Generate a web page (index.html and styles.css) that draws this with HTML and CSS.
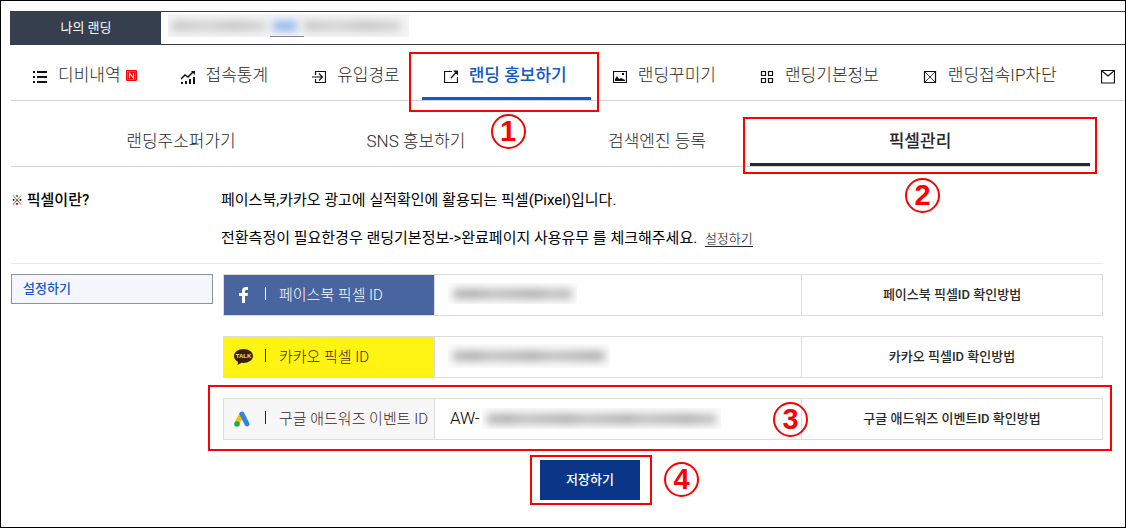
FILE: index.html
```html
<!DOCTYPE html>
<html lang="ko">
<head>
<meta charset="utf-8">
<meta name="viewport" content="width=device-width, initial-scale=1">
<title>픽셀관리</title>
<link rel="stylesheet" href="styles.css">
</head>
<body>
<div class="page">
  <header class="topbar">
    <div class="topbar-title">나의 랜딩</div>
    <div class="topbar-info">
      <div class="mask mask-info"><span class="smear smear-a"></span><span class="smear smear-link"></span><span class="smear smear-b"></span></div>
    </div>
  </header>

  <nav class="menu">
    <a class="menu-item" href="#db">
      <svg class="icon" viewBox="0 0 14 14"><path d="M0 1h2v2H0zM4 1h10v2H4zM0 6h2v2H0zM4 6h10v2H4zM0 11h2v2H0zM4 11h10v2H4z"/></svg>
      <span class="menu-text">디비내역<svg class="new" viewBox="0 0 11 11"><rect width="11" height="11" rx="1" fill="#f00"/><rect x="1.500" y="1.500" width="8" height="8" fill="none" stroke="#ff8080" stroke-width=".6"/><path d="M3.500 8V3l4 5V3" fill="none" stroke="#fff" stroke-width="1.100"/></svg></span>
    </a>
    <a class="menu-item" href="#stats">
      <svg class="icon" viewBox="0 0 14 14"><path d="M0 9l4-4 3 2 5-5" fill="none" stroke="#111" stroke-width="1.500"/><path d="M10 1h4v4zM0 12h2v2H0zM4 11h2v3H4zM8 9h2v5H8zM12 7h2v7h-2z"/></svg>
      <span class="menu-text">접속통계</span>
    </a>
    <a class="menu-item" href="#source">
      <svg class="icon line" viewBox="0 0 14 14"><path d="M3.500 5V1.500h10v11h-10V9M0 7h10M7 3.500L10.500 7 7 10.500"/></svg>
      <span class="menu-text">유입경로</span>
    </a>
    <a class="menu-item is-active" href="#promote" aria-current="page">
      <svg class="icon line" viewBox="0 0 14 14"><path d="M8 1.500H.5v11h13V7M7 8l5.500-6"/><path d="M9 .5h5v5z" fill="#111" stroke="none"/></svg>
      <span class="menu-text">랜딩 홍보하기</span>
      <span class="frame frame-menu"></span><span class="step step-menu">1</span>
    </a>
    <a class="menu-item" href="#design">
      <svg class="icon line" viewBox="0 0 14 14"><path d="M.5 1.500h13v11H.5z"/><path d="M2 11V9l2-3 2 3 2-1 2 1 2 1v1zM9 3h2v2H9z" fill="#111" stroke="none"/></svg>
      <span class="menu-text">랜딩꾸미기</span>
    </a>
    <a class="menu-item" href="#basic">
      <svg class="icon line" viewBox="0 0 14 14"><path d="M1.500 1.500h4v4h-4zM8.500 1.500h4v4h-4zM1.500 8.500h4v4h-4zM8.500 8.500h4v4h-4z"/></svg>
      <span class="menu-text">랜딩기본정보</span>
    </a>
    <a class="menu-item" href="#block">
      <svg class="icon line" viewBox="0 0 14 14"><path d="M1.500 1.500h11v11h-11z"/><path d="M2 2l10 10M12 2L2 12" stroke-width=".8"/></svg>
      <span class="menu-text">랜딩접속IP차단</span>
    </a>
    <a class="menu-item" href="#mail" aria-label="메일">
      <svg class="icon line" viewBox="0 0 14 14"><path d="M.5 .5h13v12.500H.5zM1 1l6 5 6-5"/></svg>
    </a>
  </nav>

  <nav class="tabs">
    <a class="tab" href="#embed">랜딩주소퍼가기</a>
    <a class="tab" href="#sns">SNS 홍보하기</a>
    <a class="tab" href="#search">검색엔진 등록</a>
    <a class="tab is-active" href="#pixel" aria-current="page">픽셀관리<span class="frame frame-tab"></span><span class="step step-tab">2</span></a>
  </nav>

  <main class="content">
    <section class="about">
      <h1 class="about-title"><span class="about-mark">※</span> 픽셀이란?</h1>
      <div class="about-text">
        <p>페이스북,카카오 광고에 실적확인에 활용되는 픽셀(Pixel)입니다.</p>
        <p>전환측정이 필요한경우 랜딩기본정보-&gt;완료페이지 사용유무 를 체크해주세요. <a class="about-link" href="#basic">설정하기</a></p>
      </div>
    </section>

    <form class="settings">
      <div class="settings-body">
        <a class="side" href="#settings">설정하기</a>
        <div class="rows">
          <div class="row">
            <label class="label label-fb" for="fb">
              <svg class="brand" viewBox="0 0 19 16"><path d="M8 16V9H5V6h3V4c0-2.600 1.500-4 4-4h2v3h-1.500C11.300 3 11 3.400 11 4.300V6h3l-.5 3H11v7z" fill="#fff"/></svg>
              <span class="label-text">페이스북 픽셀 ID</span>
            </label>
            <div class="field"><input class="input" id="fb" type="text"><span class="mask mask-fb"><span class="smear"></span></span></div>
            <a class="help" href="#help-fb">페이스북 픽셀ID 확인방법</a>
          </div>
          <div class="row">
            <label class="label label-kakao" for="kakao">
              <svg class="brand" viewBox="0 0 19 16"><path d="M9.500 0C4.300 0 0 3 0 7c0 2.600 1.600 4.700 4 5.800L3.500 16l4-2.200c5.900.7 11.500-2.300 11.500-6.800 0-4-4.300-7-9.500-7z" fill="#3b1c1c"/><text class="talk" x="9.500" y="9">TALK</text></svg>
              <span class="label-text">카카오 픽셀 ID</span>
            </label>
            <div class="field"><input class="input" id="kakao" type="text"><span class="mask mask-kakao"><span class="smear"></span></span></div>
            <a class="help" href="#help-kakao">카카오 픽셀ID 확인방법</a>
          </div>
          <div class="row">
            <label class="label label-google" for="google">
              <svg class="brand" viewBox="0 0 19 16"><path d="M8 3L3 12" stroke="#fbbc04" stroke-width="5"/><path d="M8 3l5 10" stroke="#2f87e0" stroke-width="5" stroke-linecap="round"/><circle cx="3" cy="13" r="2.800" fill="#25a84a"/></svg>
              <span class="label-text">구글 애드워즈 이벤트 ID</span>
            </label>
            <div class="field"><input class="input" id="google" type="text" value="AW-"><span class="mask mask-google"><span class="smear"></span></span><span class="step step-row">3</span></div>
            <a class="help" href="#help-google">구글 애드워즈 이벤트ID 확인방법</a>
            <span class="frame frame-row"></span>
          </div>
        </div>
      </div>
      <div class="actions">
        <div class="save-wrap"><button class="save" type="button">저장하기</button><span class="frame frame-save"></span><span class="step step-save">4</span></div>
      </div>
    </form>
  </main>
</div>
</body>
</html>
```
FILE: styles.css
```css
* { box-sizing: border-box; }
body {
  margin: 0;
  font-family: Roboto, "Noto Sans CJK KR", sans-serif;
  font-size: 15px;
  color: #000;
  background: #fff;
}
a { color: inherit; text-decoration: none; }
.page {
  min-height: 100vh;
  padding: 10px 0 0 9px;
  border: 1px solid #000;
  overflow: hidden;
}

/* top bar */
.topbar {
  display: flex;
  height: 34px;
  border: 1px solid #353f4d;
  border-right: 0;
}
.topbar-title {
  width: 150px;
  background: #353f4d;
  color: #fff;
  font-size: 13px;
  line-height: 32px;
  text-align: center;
}
.topbar-info { flex: 1; padding: 2px 7px; }

/* obscured values */
.mask { display: flex; align-items: center; overflow: hidden; background: #fcfcfc; }
.smear {
  flex: 1;
  height: 10px;
  background: repeating-linear-gradient(90deg, #b4b4b4 0, #a8a8a8 22px, #bcbcbc 37px, #b4b4b4 60px);
  filter: blur(4px);
}
.mask-info { position: relative; width: 241px; height: 23px; background: #f5f5f5; }
.mask-info .smear { background: repeating-linear-gradient(90deg, #c2c2c2 0, #d2d2d2 34px, #c2c2c2 60px); }
.mask-info .smear-a { flex: 0 0 94px; margin-left: 4px; }
.mask-info .smear-link { flex: 0 0 24px; margin: 0 7px; background: #8fb5ee; }
.mask-info .smear-b { margin-right: 8px; }
.mask-info::after {
  content: "";
  position: absolute;
  left: 102px;
  bottom: 0;
  width: 34px;
  border-bottom: 1px solid #848995;
}

/* main menu */
.menu, .tabs, .content { margin-left: 1px; }
.menu { display: flex; height: 56px; border-bottom: 1px solid #d3d4da; }
.menu-item {
  position: relative;
  display: flex;
  flex: none;
  align-items: center;
  gap: 11px;
  padding: 4px 22px 0;
  color: #282828;
  font-size: 17px;
  font-weight: 300;
  white-space: nowrap;
}
.menu-item.is-active { padding-right: 24px; color: #1259c8; font-weight: 500; }
.menu-item.is-active::after {
  content: "";
  position: absolute;
  left: 0;
  right: 0;
  bottom: 0;
  height: 3px;
  background: #1259c8;
}
.menu-text { line-height: 24px; }
.icon { width: 14px; height: 14px; margin-top: 4px; fill: #111; }
.line { fill: none; stroke: #111; stroke-width: 1.2; }
.new { width: 11px; height: 11px; margin-left: 5px; }

/* sub tabs */
.tabs {
  display: grid;
  grid-template-columns: 174fr 296fr 186fr 340fr;
  height: 66px;
  margin-right: 35px;
  padding-left: 83px;
  border-bottom: 1px solid #d3d3d3;
}
.tab {
  position: relative;
  padding-top: 28px;
  color: #282828;
  font-size: 17px;
  font-weight: 300;
  line-height: 24px;
  text-align: center;
  white-space: nowrap;
}
.tab.is-active { border-bottom: 3px solid #282828; font-weight: 500; }

/* description */
.content { margin-right: 22px; }
.about {
  display: grid;
  grid-template-columns: 210px 1fr;
  padding: 21px 0 12px;
  border-bottom: 1px solid #ebebeb;
  line-height: 25px;
}
.about-title { margin: 0; font-size: 15px; font-weight: 500; }
.about-mark { font-size: 12px; }
.about-text { display: grid; gap: 13px; }
.about-text p { margin: 0; }
.about-link { margin-left: 4px; font-size: 13px; font-weight: 300; border-bottom: 1px solid #282828; }

/* settings form */
.settings-body { display: flex; gap: 10px; padding-top: 10px; }
.side {
  width: 202px;
  height: 30px;
  padding-left: 11px;
  border: 1px solid #8f929c;
  background: #f4f6fb;
  color: #1259c8;
  font-size: 13px;
  font-weight: 500;
  line-height: 28px;
}
.rows { display: grid; flex: 1; gap: 20px; }
.row {
  position: relative;
  display: grid;
  grid-template-columns: 210px 367fr 301fr;
  height: 42px;
  border: 1px solid #dcdcdc;
}
.label { display: flex; align-items: center; padding-left: 10px; font-weight: 300; white-space: nowrap; }
.label-fb { background: #4865a0; color: #fff; }
.label-kakao { background: #fff314; color: #3b1c1c; }
.label-google { background: #f7f7f7; color: #3b1c1c; }
.brand { flex: none; width: 19px; height: 16px; fill: none; }
.talk {
  fill: #fff314;
  font-family: "Liberation Sans", sans-serif;
  font-size: 6px;
  font-weight: 700;
  text-anchor: middle;
}
.label-text { display: flex; align-items: center; padding-bottom: 3px; }
.label-text::before {
  content: "";
  height: 13px;
  margin: 0 13px 0 12px;
  border-left: 1px solid currentColor;
}
.field { position: relative; border-left: 1px solid #dcdcdc; }
.input {
  display: block;
  width: 100%;
  height: 100%;
  padding: 0 15px 2px;
  border: 0;
  background: none;
  color: #000;
  font: inherit;
  font-size: 17px;
  font-weight: 300;
  outline: 0;
}
.field .mask { position: absolute; top: 8px; left: 13px; height: 21px; padding: 0 5px; pointer-events: none; }
.field .mask-fb { width: 129px; }
.field .mask-kakao { width: 162px; height: 24px; top: 7px; }
.field .mask-google { top: 9px; left: 47px; width: 239px; }
.help {
  border-left: 1px solid #dcdcdc;
  color: #282828;
  font-size: 13px;
  font-weight: 500;
  line-height: 39px;
  text-align: center;
}
.actions { display: flex; justify-content: center; padding: 20px 0 26px 66px; }
.save-wrap { position: relative; }
.save {
  display: block;
  width: 100px;
  height: 40px;
  padding: 0 0 3px;
  border: 0;
  background: #0b3587;
  color: #fff;
  font: inherit;
  font-size: 13px;
  font-weight: 500;
}

/* numbered callouts */
.frame { position: absolute; z-index: 1; border: 2px solid #f00; pointer-events: none; }
.step {
  position: absolute;
  z-index: 2;
  width: 35px;
  height: 35px;
  border: 2px solid #f00;
  border-radius: 50%;
  color: #f00;
  font-family: "Liberation Sans", sans-serif;
  font-size: 29px;
  font-weight: 700;
  line-height: 30px;
  text-align: center;
}
.frame-menu { inset: 7px -8px -12px -13px; }
.step-menu { left: 69px; bottom: -49px; }
.frame-tab { inset: 16px -7px -11px -7px; }
.step-tab { left: 155px; bottom: -50px; }
.frame-row { inset: -14px -10px -12px -16px; }
.step-row { top: 3px; right: -7px; }
.frame-save { inset: -5px -12px -5px -10px; }
.step-save { left: 124px; top: 2px; }
```
